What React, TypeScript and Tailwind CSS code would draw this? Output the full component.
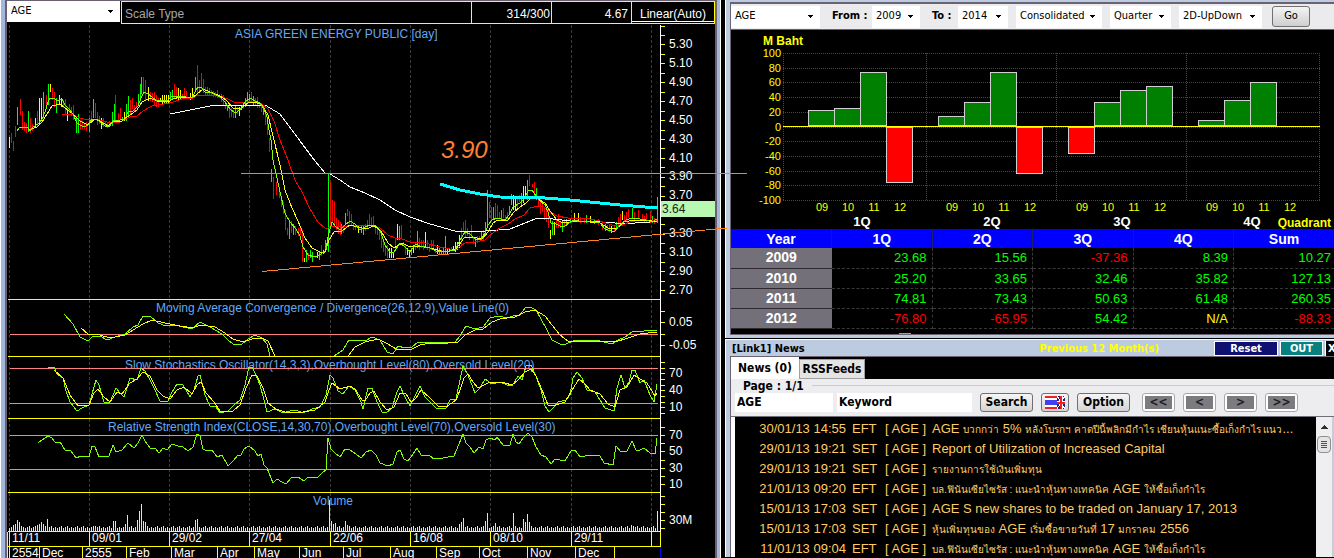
import type { ReactNode } from "react";

const GRID_X = [9, 89, 169, 249, 330, 410, 490, 571, 651];

// Moving averages, as "x,y" points on the chart canvas
const MA_FAST =
  "17,131 20,127 22,128 24,127 28,128 30,131 33,127 38,124 42,119 45,112 48,102 50,98 54,98 57,101 62,99 65,105 70,110 73,114 77,123 80,125 84,127 88,125 92,119 97,119 100,122 105,126 109,127 113,121 120,120 125,119 128,112 133,111 138,106 141,98 144,92 148,94 152,97 157,101 168,100 172,96 180,96 186,97 192,98 195,92 198,87 201,87 205,92 212,93 220,97 225,102 230,109 235,113 240,110 245,102 250,98 255,101 260,103 264,109 267,117 269,130 271,140 273,160 277,178 280,192 285,213 290,222 296,229 300,236 303,247 308,255 315,257 321,254 326,250 328,237 332,222 336,227 340,230 345,225 350,221 355,224 360,230 365,227 370,225 376,226 380,230 385,245 390,252 394,252 400,243 405,247 410,252 416,244 420,246 430,248 436,251 445,252 455,250 460,240 465,232 470,234 475,239 481,239 485,233 488,225 492,220 497,218 505,220 509,215 513,207 520,203 524,199 528,191 532,190 536,196 540,201 545,205 548,212 551,223 556,224 560,226 564,227 570,222 575,220 580,222 590,221 600,223 605,229 614,232 620,225 626,220 632,218 640,219 646,220 652,222 657,219";
const MA_MID =
  "29,130 37,127 42,122 47,114 52,106 60,104 65,108 72,113 80,121 88,125 95,119 100,121 108,126 113,121 122,121 130,115 137,110 142,102 150,98 157,101 168,102 173,99 180,97 192,98 197,94 203,89 210,92 220,96 226,100 233,108 240,109 248,103 255,102 262,105 268,115 274,140 280,165 285,190 292,208 298,221 305,238 312,248 320,252 325,252 329,240 334,232 342,231 350,225 358,227 366,229 374,226 381,231 388,243 394,248 402,243 410,247 418,246 430,248 445,252 456,249 464,238 472,237 482,239 488,232 493,223 498,220 508,220 514,212 520,207 526,203 532,197 538,199 545,203 550,211 557,220 563,223 570,222 580,221 590,222 600,223 608,228 616,229 624,222 634,220 646,220 657,222";
const MA_SLOW =
  "62,114 72,114 80,118 88,120 97,119 107,122 120,122 130,117 137,116 143,111 152,106 170,103 185,98 193,98 198,95 217,95 228,99 236,103 245,102 254,101 262,104 268,109 274,121 280,140 288,160 295,180 302,192 310,209 318,222 326,229 332,226 340,227 355,225 370,225 380,228 388,235 395,238 402,239 410,242 425,243 440,247 455,250 465,243 475,242 485,240 490,235 500,228 508,224 515,219 524,215 530,208 538,206 544,207 550,212 557,216 568,218 578,218 590,219 600,221 612,225 620,226 630,222 640,220 650,220 657,221";
const MA_LONG =
  "170,114 185,111 200,108 215,105 265,105 280,114 300,141 315,161 325,173 330,174 340,180 350,187 365,193 380,200 395,210 410,217 430,224 455,231 485,231 510,229 525,223 535,219 545,218 570,221 590,221 615,223 635,223 650,222 657,220";

const MACD_A =
  "64,314 73,324 80,337 88,341 93,336 100,336 107,340 115,337 125,334 133,327 138,325 143,316 150,316 158,323 166,326 175,325 192,329 200,322 210,327 222,334 228,340 233,344 241,345 248,339 255,335 262,338 267,344 270,356";
const MACD_B =
  "334,356 343,350 349,340 358,340 365,341 372,337 380,340 387,352 393,354 398,346 405,348 412,347 418,342 455,342 460,336 466,326 475,329 483,327 490,318 498,316 508,318 513,316 520,315 525,308 530,307 536,310 541,319 547,330 552,340 560,344 566,344 575,340 600,341 612,344 618,340 625,337 632,332 657,330";
const SIGNAL_A =
  "81,328 88,334 100,335 110,338 125,335 133,330 143,324 152,320 165,323 180,326 193,328 200,325 215,327 225,333 233,339 243,342 252,339 262,338 268,341 275,356";
const SIGNAL_B =
  "348,356 355,347 365,342 378,339 388,344 396,349 412,349 420,345 430,343 448,343 458,342 465,335 475,330 483,329 492,322 500,319 515,317 525,312 535,310 545,316 552,325 560,335 568,341 580,341 600,341 615,342 628,338 640,334 657,332";

const STOCH_K =
  "48,367 54,367 57,374 63,378 66,391 70,402 77,411 82,408 89,405 92,394 96,380 99,385 104,402 110,402 116,388 120,393 124,397 130,378 137,380 141,368 145,371 150,380 155,390 160,401 168,401 172,392 177,384 183,385 190,397 194,390 198,376 200,375 205,395 210,406 216,407 220,413 228,411 233,406 240,400 245,385 249,367 252,367 256,375 260,385 264,400 267,412 275,409 283,413 290,411 296,410 303,413 312,409 320,407 326,395 330,375 333,378 338,391 343,394 349,386 355,390 361,402 363,409 368,388 372,388 377,402 382,412 386,413 392,408 397,392 400,386 405,397 410,406 415,396 420,386 425,397 430,402 436,408 446,408 450,400 456,399 460,380 463,366 468,375 475,393 480,388 485,379 492,384 500,382 507,385 512,386 518,376 522,380 526,366 531,365 536,376 541,390 545,406 549,412 553,408 558,402 566,400 570,395 573,378 577,372 582,378 587,390 595,392 600,400 605,408 614,411 617,388 621,375 625,388 629,382 632,370 635,370 640,383 644,380 650,395 654,402 657,384";
const STOCH_D =
  "54,370 63,378 70,395 78,406 89,405 94,393 98,389 104,397 110,402 117,392 122,394 130,383 137,379 143,372 150,376 157,390 163,396 170,399 177,390 184,387 192,394 197,385 201,382 206,393 214,402 220,411 233,411 240,405 246,388 252,375 257,376 263,388 268,403 276,409 288,413 303,412 315,410 325,402 329,390 332,383 340,389 350,386 355,389 362,400 365,401 370,393 374,391 380,402 387,410 394,407 400,393 406,394 411,402 416,398 421,390 430,398 438,406 446,407 456,400 460,390 464,378 468,374 473,382 478,388 490,382 505,383 512,385 518,380 525,372 531,369 536,376 542,390 548,405 553,406 565,402 572,390 579,379 585,384 590,390 600,394 608,404 615,407 620,390 627,387 634,375 640,379 647,383 655,396 657,393";
const RSI =
  "38,443 42,440 48,436 52,438 55,442 60,442 65,450 71,451 76,458 81,456 89,457 92,446 95,447 99,457 109,456 113,445 116,452 122,450 128,443 134,448 138,443 142,435 145,441 150,448 155,448 159,453 163,448 167,450 172,444 178,446 183,447 188,451 193,447 197,434 200,436 203,449 207,451 212,450 217,457 222,455 228,466 233,461 238,455 241,455 244,449 249,446 255,451 258,456 261,454 264,465 267,468 273,483 277,479 282,482 286,484 292,477 298,477 304,481 308,477 318,477 322,473 326,470 328,438 331,449 335,453 340,457 345,449 350,450 356,454 361,458 366,452 371,450 376,455 380,463 388,466 393,464 397,452 400,450 404,459 408,461 413,454 417,448 421,455 430,456 434,459 443,458 454,456 459,444 463,434 466,443 470,447 474,453 479,447 483,449 486,440 490,438 495,440 497,437 503,445 510,445 513,434 516,442 519,444 523,438 528,433 532,437 536,447 541,455 546,457 551,464 555,459 565,461 571,451 575,450 580,457 590,455 600,456 604,463 613,465 616,446 621,452 627,451 632,441 636,450 640,450 644,448 650,453 655,454 657,438";

// Daily bars: x, colour, high-low
const BARS =
  "9y137-148 11r133-143 13r141-151 15r126-137 17g107-125 20r99-115 22r111-130 24r122-131 26r123-133 28g111-132 30r118-133 32r124-131 35y118-128 37r111-127 39y98-125 41y98-121 43g92-118 46r95-108 48g84-105 50y84-92 52r88-100 54r92-107 56g98-113 59y95-104 61y98-107 63r100-108 65r99-114 67y110-121 69r104-113 71r107-116 73r105-120 76g116-133 78g114-133 80r120-130 82r121-129 84r123-129 86r122-131 89g118-132 91r111-122 93g99-118 95r103-118 97r112-125 99r116-124 101y118-129 103r118-127 105r121-127 107r122-128 109r121-126 112g112-126 114g104-122 115r95-120 118r113-121 120r108-120 122g117-121 124y112-121 126g104-121 128g96-117 130r100-115 132r98-109 134r105-112 136r102-108 138g94-104 140g84-100 141g77-94 143r77-92 145r80-100 148y87-101 150r92-101 152r93-102 154r92-105 156r95-107 158r98-107 160y98-102 162y95-105 164y95-104 166y95-104 168y95-103 170g92-101 172g90-99 174r84-99 176r87-96 178y88-100 180y90-100 182r94-98 184r88-98 186r91-98 190y93-100 192y88-98 195g77-92 197r65-95 199r80-93 201r73-89 203r79-93 205r87-95 207r87-96 209r88-96 211r90-96 213r91-97 215r92-97 217r90-98 219r94-98 221r94-102 223r95-106 225r99-109 227g106-111 229r108-118 231r108-117 233r110-118 235g106-118 237r107-114 239y107-116 241y105-110 243r104-109 245g98-107 247g92-104 249g94-101 251r92-103 253g96-105 255r98-106 257r97-108 259r102-108 261r104-112 263g105-115 265r112-125 267r119-135 269r138-152 271g169-182 273r177-199 276r182-195 279r188-198 281r197-207 283r202-214 285r210-230 287r228-235 289g220-239 291r221-233 293g224-235 295r226-235 298r228-236 300r227-235 302r230-262 304y258-262 306g250-262 308r253-260 310g250-258 312g252-262 315r256-258 317y252-258 319g252-260 321r245-256 323y250-254 325g240-252 328g173-252 330r182-228 332r200-222 334r201-224 336r218-230 338r220-234 340r222-235 341g224-234 343r225-233 345g213-225 347r209-216 349r211-224 351r214-225 353r224-230 355r225-230 358y225-233 361g226-233 363g226-235 365r224-231 367r220-228 369r214-225 371r217-226 373r216-226 375r226-234 377r229-235 379r230-240 381r235-248 383r240-252 385r245-256 387r245-258 389y248-258 391y248-258 393y252-258 395r238-250 397y224-240 399g226-240 401r225-238 403r242-246 405r245-255 407y248-255 409y250-258 411g248-255 413y245-253 415r242-250 417g231-248 419r238-250 421r240-248 423r240-250 425y232-248 427r240-250 429r244-252 431r240-250 433r240-250 435r248-253 437y245-254 439g248-254 441g250-254 443g248-254 445g236-254 447y248-254 449y248-252 451r247-251 453y246-251 455y242-252 457y242-250 459y235-248 461r228-245 463r222-232 465r220-238 467r228-236 469r232-240 471r225-238 473r238-244 475g238-247 477r236-243 479r236-240 481g232-240 483r230-240 485g222-236 487g190-225 489r202-218 491r207-222 493g207-220 495r203-218 497r205-218 499r212-218 501g210-220 503r208-218 505r215-220 507r212-220 509g206-215 511g194-205 513y195-210 515y198-210 517r196-208 519r195-202 521g193-206 523y186-203 525y186-197 527g180-200 529r175-186 532r184-187 534r182-198 536g188-200 538r197-206 540r196-214 542r203-212 544r208-220 546r210-222 548r215-228 550y230-239 552g221-235 554y222-235 556r220-228 558r214-228 560r222-228 562g220-232 564r219-226 566g219-225 570g218-223 574y213-220 578y213-221 580r217-223 584r218-223 586g215-223 590y216-223 594g219-224 598r219-225 602r222-230 605g224-231 607r225-231 609r224-232 611y226-233 614r226-232 616g222-229 618r217-225 620r214-224 622y211-220 624r215-222 626r212-222 628r209-218 632g208-218 634r212-220 638r210-219 642r214-221 644r216-222 646r213-222 650r211-223 652g216-223 654r218-224 657g197-223";

const BAR_COLORS: Record<string, string> = { r: "#ff0000", g: "#00ff00", y: "#ffff00" };

const candles = BARS.split(" ").map((b) => {
  const m = b.match(/^(\d+)([rgy])(\d+)-(\d+)$/)!;
  return { x: +m[1], color: BAR_COLORS[m[2]], high: +m[3], low: +m[4] };
});

// Volume spikes, top of the bar by x
const SPIKES: Record<number, number> = {
  13: 525, 15: 524, 17: 520, 19: 522, 21: 526, 37: 525, 39: 524, 41: 522, 43: 524, 47: 519,
  93: 526, 95: 526, 113: 521, 115: 521, 125: 524, 127: 515, 137: 520, 139: 511, 141: 504, 143: 521, 145: 522,
  195: 520, 197: 519, 329: 500, 331: 521, 333: 524, 335: 523, 345: 521, 347: 525,
  459: 524, 461: 522, 463: 518, 485: 521, 487: 513, 495: 523, 513: 513, 515: 526, 523: 519, 525: 522, 527: 514, 529: 522,
  631: 525, 633: 526, 657: 511,
};

const volumes = Array.from({ length: 325 }, (_, i) => {
  const x = 9 + i * 2;
  return { x, top: SPIKES[x] ?? 528 - ((i * 7 + (i >> 3)) % 3) };
});

// The last price badge takes the place of the 3.50 label
const PRICE_TICKS = ["5.30", "5.10", "4.90", "4.70", "4.50", "4.30", "4.10", "3.90", "3.70", "", "3.30", "3.10", "2.90", "2.70"];

const DATES = ["11/11", "09/01", "29/02", "27/04", "22/06", "16/08", "08/10", "29/11"];

const MONTHS: [number, string][] = [
  [9, "2554"], [39, "Dec"], [82, "2555"], [126, "Feb"], [171, "Mar"], [217, "Apr"], [254, "May"],
  [299, "Jun"], [343, "Jul"], [390, "Aug"], [436, "Sep"], [479, "Oct"], [527, "Nov"], [575, "Dec"], [614, ""],
];

type PaneProps = {
  top: number;
  height: number;
  title: string;
  titleX: number;
  titleY: number;
  labels: [number, string][];
  ticks: number[];
  levels?: number[];
  children: ReactNode;
};

function Pane({ top, height, title, titleX, titleY, labels, ticks, levels = [], children }: PaneProps) {
  const bottom = top + height;
  return (
    <svg viewBox={`7 ${top} 708 ${height}`} className="block w-full h-auto" fill="none">
      <g shapeRendering="crispEdges">
        {GRID_X.map((x) => (
          <line key={x} x1={x + 0.5} x2={x + 0.5} y1={top} y2={bottom} stroke="#3c3c3c" strokeDasharray="3 2" />
        ))}
      </g>
      <text x={titleX} y={titleY} fontSize="12" fill="#63a8f4">{title}</text>
      <g shapeRendering="crispEdges">
        {levels.map((y) => (
          <line key={y} x1="10" x2="658" y1={y + 0.5} y2={y + 0.5} stroke="#ff8080" />
        ))}
        {children}
        <line x1="660.5" x2="660.5" y1={top} y2={bottom} stroke="#fff" />
        {ticks.map((y) => (
          <line key={y} x1="661" x2="665" y1={y + 0.5} y2={y + 0.5} stroke="#ffff00" />
        ))}
        <line x1="8" x2="660" y1={bottom - 0.5} y2={bottom - 0.5} stroke="#ffff00" />
      </g>
      {labels.map(([y, text]) => (
        <text key={y} x="669" y={y} fontSize="12" fill="#fff">{text}</text>
      ))}
    </svg>
  );
}

function DateAxis() {
  return (
    <svg viewBox="7 532 708 26" className="block w-full h-auto" fill="none">
      <g shapeRendering="crispEdges" stroke="#ffff00">
        {[...GRID_X, 660].map((x) => (
          <line key={x} x1={x + 0.5} x2={x + 0.5} y1="532" y2="546" />
        ))}
        <line x1="8" x2="661" y1="546.5" y2="546.5" />
        {MONTHS.map(([x]) => (
          <line key={x} x1={x + 0.5} x2={x + 0.5} y1="547" y2="558" />
        ))}
        <line x1="7.5" x2="7.5" y1="532" y2="558" />
        <line x1="660.5" x2="660.5" y1="547" y2="558" stroke="#0000ff" />
      </g>
      {DATES.map((d, i) => (
        <text key={d} x={GRID_X[i] + 3} y="542" fontSize="12" fill="#fff">{d}</text>
      ))}
      {MONTHS.map(([x, m]) => (
        <text key={x} x={x + 3} y="557" fontSize="12" fill="#fff">{m}</text>
      ))}
    </svg>
  );
}

function Arrow() {
  return (
    <svg width="5" height="3" viewBox="0 0 5 3" className="pointer-events-none -ml-3 shrink-0" shapeRendering="crispEdges">
      <path d="M0 0h5L2.5 3z" fill="#000" />
    </svg>
  );
}

function Select({ label, value, className }: { label: string; value: string; className: string }) {
  return (
    <div className={`flex items-center bg-white text-black ${className}`}>
      <select aria-label={label} defaultValue={value} className="h-full w-full appearance-none bg-transparent pl-1 outline-none">
        <option>{value}</option>
      </select>
      <Arrow />
    </div>
  );
}

function StockChart() {
  return (
    <section className="border-x border-white">
      <div className="border-l-4 border-r-[3px] border-[#a3b6dc]">
        <div className="border-x-2 border-t border-[#6b6070] bg-black">
          <div className="flex h-6 items-start text-[11px]">
            <Select label="Symbol" value="AGE" className="mr-px h-[21px] w-[113px] shrink-0 font-['DejaVu_Sans_Condensed','Noto_Sans',sans-serif]" />
            <div className="flex h-[23px] flex-1 border border-[#ffff00] text-[12px] leading-[25px] text-white">
              <div className="flex-1 pl-[3px] text-[#a8a8a8]">Scale Type</div>
              <div className="w-20 border-l border-[#ffff00] pr-px text-right">314/300</div>
              <div className="w-20 border-l border-[#ffff00] pr-[3px] text-right">4.67</div>
              <div className="w-[83px] border-l border-[#ffff00]">
                <button className="block h-5 w-full border-b border-white text-center leading-6">Linear(Auto)</button>
              </div>
            </div>
          </div>

          <Pane
            top={25}
            height={275}
            title="ASIA GREEN ENERGY PUBLIC [day]"
            titleX={235}
            titleY={38}
            labels={PRICE_TICKS.map((t, i) => [Math.round(48 + i * 18.92), t])}
            ticks={Array.from({ length: 29 }, (_, i) => Math.round(25.5 + i * 9.46))}
          >
            {candles.map((c, i) => (
              <line key={i} x1={c.x + 0.5} x2={c.x + 0.5} y1={c.high} y2={c.low} stroke={c.color} />
            ))}
            <polyline points={MA_LONG} stroke="#fff" />
            <polyline points={MA_SLOW} stroke="#ff0000" />
            <polyline points={MA_MID} stroke="#ffff00" />
            <polyline points={MA_FAST} stroke="#80ff00" />
          </Pane>
          <Pane
            top={300}
            height={57}
            title="Moving Average Convergence / Divergence(26,12,9),Value Line(0)"
            titleX={156}
            titleY={312}
            labels={[[326, "0.05"], [349, "-0.05"]]}
            ticks={[311, 322, 334, 345]}
            levels={[334]}
          >
            <polyline points={MACD_A} stroke="#80ff00" />
            <polyline points={MACD_B} stroke="#80ff00" />
            <polyline points={SIGNAL_A} stroke="#ffff00" />
            <polyline points={SIGNAL_B} stroke="#ffff00" />
          </Pane>
          <Pane
            top={357}
            height={62}
            title="Slow Stochastics Oscillator(14,3,3),Overbought Level(80),Oversold Level(20)"
            titleX={125}
            titleY={369}
            labels={[[377, "70"], [394, "40"], [411, "10"]]}
            ticks={[362, 368, 373, 379, 385, 390, 396, 402, 407, 413]}
            levels={[368, 403]}
          >
            <polyline points={STOCH_K} stroke="#80ff00" />
            <polyline points={STOCH_D} stroke="#ffff00" />
          </Pane>
          <Pane
            top={419}
            height={74}
            title="Relative Strength Index(CLOSE,14,30,70),Overbought Level(70),Oversold Level(30)"
            titleX={108}
            titleY={431}
            labels={[[439, "70"], [455, "50"], [472, "30"], [488, "10"]]}
            ticks={[427, 435, 443, 451, 460, 468, 476, 484]}
            levels={[435, 469]}
          >
            <polyline points={RSI} stroke="#80ff00" />
          </Pane>
          <Pane
            top={493}
            height={39}
            title="Volume"
            titleX={313}
            titleY={505}
            labels={[[524, "30M"]]}
            ticks={[496, 504, 512, 520, 528]}
          >
            {volumes.map((v) => (
              <line key={v.x} x1={v.x + 0.5} x2={v.x + 0.5} y1={v.top} y2="531" stroke="#ffff00" />
            ))}
          </Pane>
          <DateAxis />
        </div>
      </div>
    </section>
  );
}

// Hand-drawn trend lines, they run over the edge of the chart window
function Annotations() {
  return (
    <svg viewBox="0 0 1334 558" className="pointer-events-none absolute left-0 top-0 w-full" fill="none">
      <rect x="661" y="201" width="54" height="16" fill="#b8f8b0" />
      <text x="662" y="213" fontSize="12" fill="#202020">3.64</text>
      <g shapeRendering="crispEdges">
        <path d="M241 173.5H747M262 271.5L727 228" stroke="#ff8020" />
        <polyline points="440,184 460,190 480,194 500,197 545,198 570,200 600,203 620,205 658,208" stroke="#00ffff" strokeWidth="3" />
      </g>
      <text x="441" y="158" fontSize="24" fontStyle="italic" fill="#ff8030">3.90</text>
    </svg>
  );
}

const QUARTERS = [
  { name: "1Q", x: 808, values: [110, 108, 72, 183] },
  { name: "2Q", x: 938, values: [116, 102, 72, 174] },
  { name: "3Q", x: 1068, values: [154, 102, 90, 86] },
  { name: "4Q", x: 1198, values: [120, 100, 82, 0] },
];

const YEARS = ["09", "10", "11", "12"];

function EarningsChart() {
  return (
    <svg viewBox="731 30 603 199" className="block w-full h-auto" fill="none">
      <g shapeRendering="crispEdges" stroke="#4a444c" strokeDasharray="1 1">
        {Array.from({ length: 11 }, (_, i) => {
          const y = Math.round(53 + i * 14.7) + 0.5;
          return <line key={i} x1="783" x2="1320" y1={y} y2={y} />;
        })}
        {[783, 926, 1056, 1186, 1319].map((x) => (
          <line key={x} x1={x + 0.5} x2={x + 0.5} y1="53" y2="200" />
        ))}
      </g>
      {Array.from({ length: 11 }, (_, i) => (
        <text key={i} x="781" y={Math.round(57 + i * 14.7)} fontSize="11" textAnchor="end" fill="#ffff00">
          {100 - i * 20}
        </text>
      ))}
      <text x="763" y="45" fontSize="12" fontWeight="bold" fill="#ffff00">M Baht</text>
      {QUARTERS.map((q) => (
        <g key={q.name}>
          {q.values.map((v, i) => {
            if (!v) return null;
            const up = v < 126;
            return (
              <rect
                key={i}
                x={q.x + i * 26 + 0.5}
                y={(up ? v : 127) + 0.5}
                width="26"
                height={up ? 125 - v : v - 128}
                fill={up ? "#008000" : "#ff0000"}
                stroke="#d0d0d0"
                shapeRendering="crispEdges"
              />
            );
          })}
          {YEARS.map((y, i) => (
            <text key={y} x={q.x + 14 + i * 26} y="211" fontSize="11" textAnchor="middle" fill="#ffff00">{y}</text>
          ))}
          <text x={q.x + 54} y="226" fontSize="13" fontWeight="bold" textAnchor="middle" fill="#fff">{q.name}</text>
        </g>
      ))}
      <line x1="783" x2="1320" y1="126.5" y2="126.5" stroke="#ffff00" shapeRendering="crispEdges" />
      <text x="1331" y="227" fontSize="12" fontWeight="bold" textAnchor="end" fill="#ffff00">Quadrant</text>
    </svg>
  );
}

const RESULTS = [
  ["2009", "23.68", "15.56", "-37.36", "8.39", "10.27"],
  ["2010", "25.20", "33.65", "32.46", "35.82", "127.13"],
  ["2011", "74.81", "73.43", "50.63", "61.48", "260.35"],
  ["2012", "-76.80", "-65.95", "54.42", "N/A", "-88.33"],
];

function valueColor(v: string) {
  if (v === "N/A") return "text-[#ffff00]";
  return v.startsWith("-") ? "text-[#ff0000]" : "text-[#00ff00]";
}

function ResultsTable() {
  return (
    <table className="w-full table-fixed border-collapse text-[13px]">
      <thead>
        <tr className="h-[19px] bg-[#0000ff] text-[14px] leading-[18px] text-white">
          {["Year", "1Q", "2Q", "3Q", "4Q", "Sum"].map((h) => (
            <th key={h} className="border-r border-[#202060] p-0 last:border-r-0">{h}</th>
          ))}
        </tr>
      </thead>
      <tbody>
        {RESULTS.map(([year, ...values]) => (
          <tr key={year} className="h-5 leading-[19px]">
            <th className="border-b border-[#302830] bg-[#74707a] p-0 text-[14px] text-white">{year}</th>
            {values.map((v, i) => (
              <td key={i} className={`border-b border-r border-dashed border-[#383838] py-0 pl-0 pr-[5px] text-right last:border-r-0 last:pr-[3px] ${valueColor(v)}`}>
                {v}
              </td>
            ))}
          </tr>
        ))}
      </tbody>
    </table>
  );
}

function EarningsWindow() {
  return (
    <section className="border-l border-white">
      <div className="border-b-[3px] border-l-4 border-t-2 border-[#bccbe0]">
        <div className="border-b border-l border-t-2 border-[#6b6373] bg-black">
          <div className="flex h-[26px] items-center overflow-hidden whitespace-nowrap border-b border-[#6b6373] bg-[#ebebee] font-['DejaVu_Sans_Condensed','Noto_Sans',sans-serif] text-[11px] text-black">
            <Select label="Stock" value="AGE" className="h-[22px] w-[89px]" />
            <span className="ml-3 w-10 font-bold">From :</span>
            <Select label="From year" value="2009" className="h-[22px] w-12" />
            <span className="ml-3 w-[26px] font-bold">To :</span>
            <Select label="To year" value="2014" className="h-[22px] w-[50px]" />
            <Select label="Statement" value="Consolidated" className="ml-2 h-[22px] w-[86px]" />
            <Select label="Period" value="Quarter" className="ml-2 h-[22px] w-[61px]" />
            <Select label="Chart style" value="2D-UpDown" className="ml-2 h-[22px] w-[83px]" />
            <button className="ml-2.5 h-[21px] w-[38px] rounded-[3px] border border-[#707070] bg-gradient-to-b from-[#f4f4f4] to-[#cfcfcf]">Go</button>
          </div>
          <EarningsChart />
          <ResultsTable />
          <div className="flex h-[5px] items-end pl-[168px]">
            <div className="h-px w-3 bg-[#a0a0a0]" />
          </div>
        </div>
      </div>
    </section>
  );
}

const NEWS = [
  ["30/01/13 14:55", "EFT", "AGE บวกกว่า 5% หลังโบรกฯ คาดปีนี้พลิกมีกำไร เชียนหุ้นแนะซื้อเก็งกำไร แนว..."],
  ["29/01/13 19:21", "SET", "Report of Utilization of Increased Capital"],
  ["29/01/13 19:21", "SET", "รายงานการใช้เงินเพิ่มทุน"],
  ["21/01/13 09:20", "EFT", "บล.ฟินันเซียไซรัส : แนะนำหุ้นทางเทคนิค AGE ให้ซื้อเก็งกำไร"],
  ["15/01/13 17:03", "SET", "AGE S new shares to be traded on January 17, 2013"],
  ["15/01/13 17:03", "SET", "หุ้นเพิ่มทุนของ AGE เริ่มซื้อขายวันที่ 17 มกราคม 2556"],
  ["11/01/13 09:04", "EFT", "บล.ฟินันเซียไซรัส : แนะนำหุ้นทางเทคนิค AGE ให้ซื้อเก็งกำไร"],
];

// Thai runs are set smaller than the Latin text around them
function Headline({ text }: { text: string }) {
  return text.split(/([\u0E00-\u0E7F]+(?:[ .:]+[\u0E00-\u0E7F]+)*)/).map((part, i) =>
    i % 2 ? <span key={i} lang="th" className="text-[10px]">{part}</span> : part
  );
}

function Flag() {
  return (
    <svg width="20" height="13" viewBox="0 0 20 13" shapeRendering="crispEdges">
      <path d="M0 0h20v13H0z" fill="#fff" />
      <path d="M0 0h12v2H0zM0 11h12v2H0z" fill="#f02020" />
      <path d="M0 4h12v5H0z" fill="#4040f0" />
      <path d="M12 0h8v13h-8z" fill="#202078" />
      <path d="M12 0l8 13M20 0l-8 13" stroke="#fff" />
      <path d="M16 0v13M12 6.5h8" stroke="#fff" strokeWidth="3" />
      <path d="M16 0v13M12 6.5h8" stroke="#f02020" strokeWidth="2" />
    </svg>
  );
}

function NewsWindow() {
  const button =
    "h-[19px] shrink-0 rounded-[3px] border border-[#707070] bg-gradient-to-b from-[#f6f6f6] to-[#d4d4d4] text-center leading-[17px]";
  return (
    <section className="border-l border-t border-white font-['DejaVu_Sans_Condensed','Noto_Sans',sans-serif] text-[11px] font-bold">
      <div className="border-l-4 border-[#bccbe0]">
        <div className="flex h-4 items-end gap-0.5 overflow-hidden whitespace-nowrap bg-[#bccbe0] pl-0.5 leading-[15px] text-black">
          <h2 className="flex-1">[Link1] News</h2>
          <span className="mr-[53px] text-[#ffff00]">Previous 12 Month(s)</span>
          <button className="h-[15px] w-16 border border-white bg-[#101070] leading-[13px] text-white">Reset</button>
          <button className="h-[15px] w-[43px] border border-white bg-[#088080] leading-[13px] text-white">OUT</button>
          <button aria-label="Close" className="h-[15px] w-[9px] overflow-hidden border-l border-white bg-black pl-0.5 leading-[13px] text-white">X</button>
        </div>

        <div className="border-l border-t border-[#6b6373]">
          <div className="flex h-[22px] items-end bg-black">
            <button className="h-[22px] w-[68px] bg-white text-[12px] text-black">News (0)</button>
            <button className="h-5 w-[66px] border border-[#a0a0a0] bg-[#e4e4e4] text-[12px] text-black">RSSFeeds</button>
          </div>

          <div className="h-[38px] overflow-hidden border-b border-[#707078] bg-[#ededf0] text-[12px] text-black">
            <div className="flex h-3.5 items-center gap-2 pl-3">
              <span className="leading-[14px]">Page : 1/1</span>
              <span className="h-px flex-1 bg-[#c8ccd8]" />
            </div>
            <div className="flex items-start pl-1">
              <input aria-label="Symbol" defaultValue="AGE" className="h-[19px] w-[98px] bg-white pl-0.5 font-bold outline-none" />
              <input aria-label="Keyword" defaultValue="Keyword" className="ml-1 h-[19px] w-[135px] bg-white pl-0.5 font-bold outline-none" />
              <button className={`ml-2 w-[53px] ${button}`}>Search</button>
              <button aria-label="Language" className={`ml-2 flex w-7 items-center justify-center ${button}`}>
                <Flag />
              </button>
              <button className={`ml-2 w-[53px] ${button}`}>Option</button>
              <div className="ml-3 flex gap-2">
                {["<<", "<", ">", ">>"].map((s) => (
                  <button key={s} className="h-[19px] w-[33px] rounded-[3px] border border-[#a8a8a8] bg-white p-0.5">
                    <span className="block h-[13px] bg-[#7c7c80] leading-[13px] text-[#202020]">{s}</span>
                  </button>
                ))}
              </div>
            </div>
          </div>

          <div className="flex border-l-4 border-white bg-black font-['Liberation_Sans',Arial,sans-serif] text-[13px] font-normal">
            <ul className="min-w-0 flex-1 leading-6 text-[#ffcc66]">
              {NEWS.map(([date, source, title], i) => (
                <li key={i} className="flex h-5 whitespace-nowrap">
                  <time className="w-[111px] text-right">{date}</time>
                  <span className="ml-1.5 w-[33px]">{source}</span>
                  <span className="w-[47px]">[ AGE ]</span>
                  <a href="#" className="min-w-0 flex-1">
                    <Headline text={title} />
                  </a>
                </li>
              ))}
            </ul>
            <div className="flex w-4 flex-col items-center bg-[#efeff2]">
              <svg width="7" height="19" viewBox="0 0 7 19" shapeRendering="crispEdges">
                <path d="M3.5 8L7 12H0z" fill="#303030" />
              </svg>
              <div className="flex h-[17px] w-3.5 flex-col items-center justify-center gap-px rounded-sm border border-[#909090] bg-[#e4e4e4]">
                <span className="h-px w-1.5 bg-[#505050]" />
                <span className="h-px w-1.5 bg-[#505050]" />
                <span className="h-px w-1.5 bg-[#505050]" />
                <span className="h-px w-1.5 bg-[#505050]" />
              </div>
            </div>
            <div className="w-0.5 bg-[#c8ccd8]" />
          </div>
        </div>
      </div>
    </section>
  );
}

export default function App() {
  return (
    <main className="relative grid min-h-screen grid-cols-[minmax(0,721fr)_minmax(0,609fr)] gap-x-1 overflow-hidden bg-black font-['Liberation_Sans',Arial,sans-serif]">
      <StockChart />
      <div className="flex flex-col gap-px">
        <EarningsWindow />
        <NewsWindow />
      </div>
      <Annotations />
    </main>
  );
}
